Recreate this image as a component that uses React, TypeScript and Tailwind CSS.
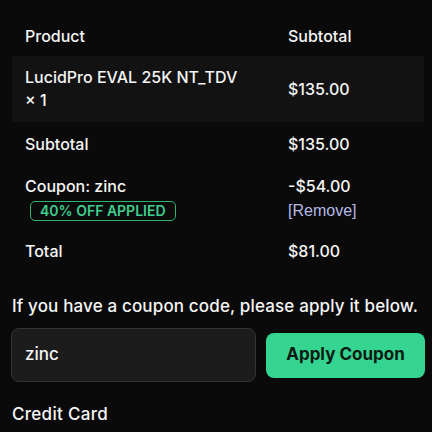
import React from "react";

export default function App() {
  return (
    <div className="w-[432px] h-[432px] overflow-hidden bg-[#0a0a0a] text-[#f5f5f5] font-['Inter',sans-serif]">
      <div className="pl-[11px] pt-[14px]">
        <table className="ml-px w-[412px] border-collapse text-[16px] font-medium">
          <thead>
            <tr className="h-[42px]">
              <th className="text-left font-medium pl-[13px] w-[264px] pt-px">Product</th>
              <th className="text-left font-medium pl-3 pt-px">Subtotal</th>
            </tr>
          </thead>
          <tbody>
            <tr className="bg-[#121212] h-[66px]">
              <td className="pl-[13px] leading-[23px] pr-2">LucidPro EVAL 25K NT_TDV<br />× 1</td>
              <td className="pl-3">$135.00</td>
            </tr>
            <tr className="h-[44px]">
              <td className="pl-[13px]">Subtotal</td>
              <td className="pl-3">$135.00</td>
            </tr>
            <tr className="h-[64px]">
              <td className="pl-[13px] align-top pt-[9px]">
                <div className="leading-[22px]">Coupon: zinc</div>
                <div className="ml-[5px] mt-[4px] inline-flex items-center h-[20px] px-[9px] rounded-[5px] border border-[#2fb36f] text-[#3ecf8e] text-[14px] font-semibold leading-none">40% OFF APPLIED</div>
              </td>
              <td className="pl-3 align-top pt-[9px]">
                <div className="leading-[22px]">-$54.00</div>
                <div className="mt-[3px] text-[#b4b9e6] font-normal text-[16px] font-['Liberation_Sans',sans-serif] leading-[22px]">[Remove]</div>
              </td>
            </tr>
            <tr className="h-[42px]">
              <td className="pl-[13px]">Total</td>
              <td className="pl-3">$81.00</td>
            </tr>
          </tbody>
        </table>
        <p className="mt-[22px] ml-px text-[17px] font-medium leading-[24px] tracking-[0.15px]">If you have a coupon code, please apply it below.</p>
        <div className="mt-[10px] flex items-center gap-[10px]">
          <div className="flex-none w-[245px] h-[54px] rounded-[8px] bg-[#1c1c1c] border border-[#333] flex items-center pl-[13px] text-[17px] font-medium">zinc</div>
          <button className="flex-none w-[159px] h-[45px] rounded-[8px] bg-[#35d490] text-[#0b1a12] text-[17px] font-bold">Apply Coupon</button>
        </div>
        <p className="mt-[20px] ml-px text-[17px] font-medium tracking-[0.3px]">Credit Card</p>
      </div>
    </div>
  );
}
